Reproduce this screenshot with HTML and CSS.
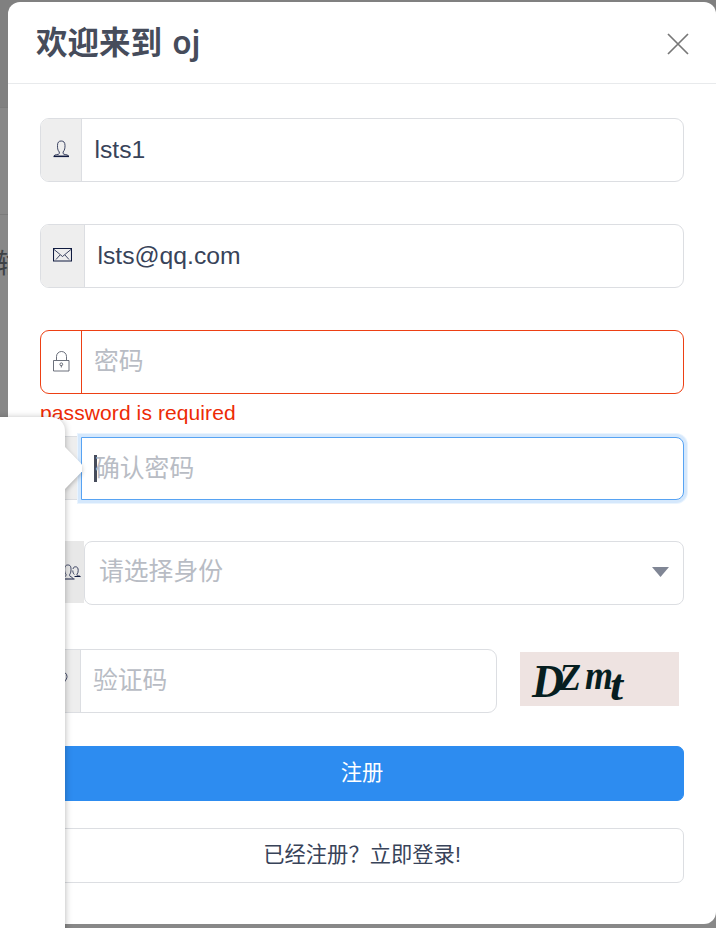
FILE: index.html
```html
<!DOCTYPE html>
<html lang="zh-CN">
<head>
<meta charset="utf-8">
<title>oj</title>
<link rel="stylesheet" href="styles.css">
</head>
<body>
<div class="page">
  <div class="backdrop"><div class="nav"></div><div class="band"></div><div class="behind">输</div></div>
  <main class="modal">
    <header class="header">
      <h1>欢迎来到 <span>oj</span></h1>
      <svg class="close" width="22" height="22" viewBox="0 0 22 22"><path d="M1 1 21 21M21 1 1 21"/></svg>
    </header>
    <form class="form">
      <div class="field">
        <span class="prefix"><svg class="icon" width="17" height="18" viewBox="0 0 17 18"><path d="M6.300 12C4.500 10 4.500 8 4.500 5.500 4.500 2.300 5.800 1 8.200 1S12 2.300 12 5.500c0 2.500-.2 4.500-1.900 6.500v1.500c0 1.500 5.400.7 5.400 2.500H1c0-1.800 5.300-1 5.300-2.500z"/><path class="base" d="M.5 16.500h15.500"/></svg></span>
        <span class="value">lsts1</span>
      </div>
      <div class="field wide">
        <span class="prefix"><svg class="icon" width="19" height="14" viewBox="0 0 19 14"><path d="M.5 1l9 7.500L18.500 1M3 11.500l4-4.500M16 11.500l-4-4.500"/><path class="box" d="M.5.5h18v12.500H.5z"/></svg></span>
        <span class="value">lsts@qq.com</span>
      </div>
      <div class="field error">
        <span class="prefix"><svg class="icon lock" width="17" height="21" viewBox="0 0 17 21"><path d="M.5 9.500h15.500v10.500H.5zM3.500 9V5.500a5 5 0 0 1 10 0V9"/><circle cx="8.300" cy="13.300" r="1.400"/><path d="M8.300 14.500v2"/></svg></span>
        <span class="value hint">密码</span>
        <span class="message">password is required</span>
      </div>
      <div class="field focus">
        <span class="prefix"></span>
        <span class="value hint"><i class="caret"></i>确认密码</span>
      </div>
      <div class="select-row">
        <span class="select-prefix"><svg class="icon" width="21" height="16" viewBox="0 0 21 16"><path d="M6 10.500C5 9 4.700 7.500 4.700 5.500 4.700 2 5.800 1 7.900 1S11 2 11 5.500c0 2-.3 3.500-1.300 5v1.200c0 1.300 2.800.8 3.300 3M6 10.500v1.200c0 1-4 .8-5 2.800"/><path d="M13 5c.4-1.700 1.200-2.200 2.500-2.200 1.800 0 2.700 1.200 2.700 3.700 0 1.700-.4 2.700-1.200 3.700v1c0 .9 2.700.3 3.200 1.300M14.300 10.500c-1-1-1.500-2.300-1.500-4"/><path class="base" d="M0 15h14.500M14.500 12.500h6"/></svg></span>
        <span class="select">请选择身份<i class="arrow"></i></span>
      </div>
      <div class="captcha-row">
        <div class="field code">
          <span class="prefix"><svg class="icon" width="16" height="20" viewBox="0 0 16 20"><path d="M8 18C5 13 1 10 1 6.500a7 5.500 0 0 1 14 0C15 10 11 13 8 18z"/></svg></span>
          <span class="value hint">验证码</span>
        </div>
        <svg class="captcha" width="159" height="54" viewBox="0 0 159 54"><text x="12" y="45" font-size="47" textLength="32" lengthAdjust="spacingAndGlyphs">D</text><text x="39" y="38" font-size="37" textLength="22" lengthAdjust="spacingAndGlyphs">Z</text><text x="65" y="37" font-size="41" textLength="28" lengthAdjust="spacingAndGlyphs">m</text><text x="90" y="48" font-size="44" textLength="13" lengthAdjust="spacingAndGlyphs">t</text></svg>
      </div>
      <div class="button primary">注册</div>
      <div class="button">已经注册？立即登录!</div>
    </form>
  </main>
  <aside class="popover"><svg class="tip" width="19" height="42" viewBox="0 0 19 42"><path d="M0 0 17 17.500V24.500L0 42z"/></svg></aside>
</div>
</body>
</html>
```
FILE: styles.css
```css
* { box-sizing: border-box; }
body { margin: 0; font-family: "Liberation Sans", "Noto Sans CJK SC", sans-serif; color: #384359; }
.page { position: relative; width: 716px; height: 928px; overflow: hidden; padding: 2px 0 0 8px; }
.backdrop { position: absolute; inset: 0; background: #888; }
.nav { height: 108px; background: #808080; border-bottom: 1px solid #7c7c7c; }
.band { height: 107px; border-bottom: 1px solid #7b7b7b; }
.behind { position: absolute; left: -3px; top: 247px; font-size: 27px; line-height: 34px; color: #3d4144; }
.modal { position: relative; width: 708px; height: 922px; background: #fff; border-radius: 12px; }
.header { display: flex; justify-content: space-between; height: 82px; padding: 0 28px; border-bottom: 1px solid #e8eaec; }
h1 { margin: 0; font: bold 31.500px/76px "Noto Sans CJK SC", sans-serif; color: #464c5b; white-space: pre; }
h1 span { font-family: "Noto Sans", sans-serif; font-weight: 600; margin-left: 3px; }
.close { margin: 31px -1px 0 0; fill: none; stroke: #777; stroke-width: 1.700; }
.form { padding: 34px 32px 0; }
.field { position: relative; display: flex; width: 644px; height: 64px; margin-bottom: 42px; border: 1px solid #dcdee2; border-radius: 9px; background: #fff; }
.prefix { display: flex; align-items: center; justify-content: center; width: 41px; padding-bottom: 2px; background: #eee; border-right: 1px solid #dcdee2; border-radius: 8px 0 0 8px; }
.wide .prefix { width: 44px; }
.icon { fill: none; stroke: #101b40; stroke-width: .8; }
.icon .base { stroke-width: 1.200; }
.icon .box { stroke-width: 1.100; }
.value { padding-left: 12.500px; font-size: 24.700px; line-height: 61px; }
.hint { padding-left: 12px; font-size: 24.800px; line-height: 62px; color: #b8bcc4; }
.error { border-color: #ed4014; }
.error .prefix { border-right-color: #ed4014; border-radius: 0; background: none; }
.icon.lock { stroke: #464c5b; }
.message { position: absolute; left: -1px; top: 70px; font-size: 21px; letter-spacing: .1px; line-height: 24px; color: #ed2b05; white-space: nowrap; }
.focus { border-color: #dcdee2; border-right: 0; }
.focus .prefix { width: 40px; border: 0; }
.focus .value { width: 603px; margin: 0 0 -1px; padding-left: 12px; border: 1px solid #57a3f3; border-radius: 0 8px 8px 0; background: #fff; box-shadow: 0 0 0 3px #d5e8fc, 0 0 0 4px #eaf4fe; display: flex; align-items: center; }
.caret { width: 3px; height: 27px; margin-right: -2px; background: #464c5b; }
.select-row { display: flex; height: 64px; margin: -1px 0 44px; }
.select-prefix { display: flex; align-items: center; justify-content: flex-end; width: 44px; height: 62px; padding-right: 3px; background: #e8e8e8; }
.select { display: flex; align-items: center; justify-content: space-between; width: 600px; padding: 0 14px 2px; border: 1px solid #dcdee2; border-radius: 8px; color: #b8bcc4; font-size: 24.800px; line-height: 60px; background: #fff; }
.arrow { width: 17px; height: 10px; background: #808695; clip-path: polygon(0 0, 100% 0, 50% 100%); }
.captcha-row { display: flex; gap: 23px; height: 64px; margin-bottom: 33px; }
.code { width: 457px; margin: 0; }
.code .prefix { width: 40px; padding-right: 1px; }
.captcha { margin-top: 3px; background: #eee3e1; font-family: "Liberation Serif", serif; font-style: italic; font-weight: bold; fill: #061e20; }
.button { height: 55px; margin-bottom: 27px; border: 1px solid #dcdee2; border-radius: 7px; text-align: center; font-size: 21.300px; line-height: 52px; }
.primary { border-color: #2d8cf0; background: #2d8cf0; color: #fff; }
.popover { position: absolute; left: -20px; top: 417px; width: 85px; height: 540px; border-radius: 0 14px 0 0; background: #fff; box-shadow: 0 1px 7px rgba(0,0,0,.3); }
.tip { position: absolute; left: 85px; top: 30px; fill: #fff; filter: drop-shadow(0 2px 2px rgba(0,0,0,.25)); clip-path: inset(-5px -5px -5px 0); }
```
